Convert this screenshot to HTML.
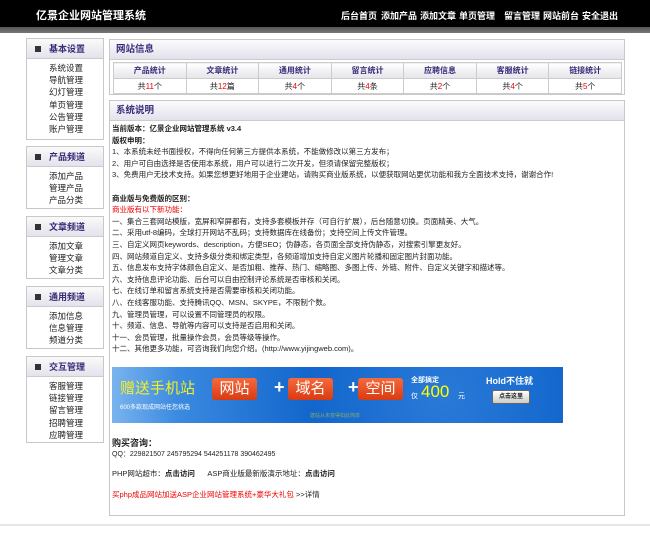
<!DOCTYPE html>
<html><head><meta charset="utf-8"><style>
*{margin:0;padding:0;box-sizing:border-box}
body{width:650px;height:537px;background:#fff;font-family:"Liberation Sans","Noto Sans CJK SC","WenQuanYi Zen Hei",sans-serif;font-size:9px;color:#222;position:relative;overflow:hidden}
.a{position:absolute}
#top{left:0;top:0;width:650px;height:27px;background:#000}
#strip{left:0;top:27px;width:650px;height:6px;background:linear-gradient(#555,#777)}
.logo{left:36px;top:7px;color:#fff;font-size:11px;font-weight:bold}
.nav{top:9px;color:#fff;font-size:9px;font-weight:bold}
.sb{left:26px;width:78px;border:1px solid #c8c8c8;background:#fff}
.sb .h{height:20px;background:linear-gradient(#fafafa,#e4e2ec);border-bottom:1px solid #ccc;font-weight:bold;color:#3a2a78;font-size:9px;line-height:20px;padding-left:8px}
.sb .h i{display:inline-block;width:6px;height:6px;background:#333;margin-right:8px;vertical-align:0}
.sb ul{list-style:none;padding:3px 0 3px 22px;line-height:12.2px;font-size:8.5px}
.pn{border:1px solid #c8c8c8;background:#fff}
.ph{height:20px;background:linear-gradient(#fbfbfd,#e3e2ec);border-bottom:1px solid #ccc;color:#3a2a78;font-weight:bold;font-size:9.5px;line-height:20px;padding-left:6px}
table{border-collapse:collapse;position:absolute;left:113px;top:62px;width:509px}
td{border:1px solid #ccc;text-align:center;height:15px;font-size:8px}
tr.h td{background:linear-gradient(#fff,#e4e4ea);color:#3a2a78;font-weight:bold;height:16px}
.r{color:#e00}
#txt{left:112px;top:123px;width:510px;line-height:11.6px;font-size:7.5px}
b{font-weight:bold}
#ban{left:112px;top:367px;width:451px;height:56px;background:radial-gradient(circle at 330px 30px,#2a7ad8,#1266cc 40%,#3b8ae0 80%,#7ab4ee)}
.bx{position:absolute;top:11px;height:22px;background:linear-gradient(#f56a3c,#d93a12);border-radius:3px;color:#fff;font-size:15px;line-height:22px;text-align:center}
</style></head><body>
<div class="a" id="top"></div><div class="a" id="strip"></div>
<div class="a logo">亿景企业网站管理系统</div>
<div class="a nav" style="left:341px">后台首页</div>
<div class="a nav" style="left:381px">添加产品</div>
<div class="a nav" style="left:420px">添加文章</div>
<div class="a nav" style="left:459px">单页管理</div>
<div class="a nav" style="left:504px">留言管理</div>
<div class="a nav" style="left:543px">网站前台</div>
<div class="a nav" style="left:582px">安全退出</div>

<div class="a sb" style="top:38px;height:102px"><div class="h"><i></i>基本设置</div><ul><li>系统设置</li><li>导航管理</li><li>幻灯管理</li><li>单页管理</li><li>公告管理</li><li>账户管理</li></ul></div>
<div class="a sb" style="top:146px;height:63px"><div class="h"><i></i>产品频道</div><ul><li>添加产品</li><li>管理产品</li><li>产品分类</li></ul></div>
<div class="a sb" style="top:216px;height:63px"><div class="h"><i></i>文章频道</div><ul><li>添加文章</li><li>管理文章</li><li>文章分类</li></ul></div>
<div class="a sb" style="top:286px;height:63px"><div class="h"><i></i>通用频道</div><ul><li>添加信息</li><li>信息管理</li><li>频道分类</li></ul></div>
<div class="a sb" style="top:356px;height:87px"><div class="h"><i></i>交互管理</div><ul><li>客服管理</li><li>链接管理</li><li>留言管理</li><li>招聘管理</li><li>应聘管理</li></ul></div>

<div class="a pn" style="left:109px;top:39px;width:516px;height:56px"><div class="ph">网站信息</div></div>
<table><tr class="h"><td>产品统计</td><td>文章统计</td><td>通用统计</td><td>留言统计</td><td>应聘信息</td><td>客服统计</td><td>链接统计</td></tr>
<tr><td>共<span class="r">11</span>个</td><td>共<span class="r">12</span>篇</td><td>共<span class="r">4</span>个</td><td>共<span class="r">4</span>条</td><td>共<span class="r">2</span>个</td><td>共<span class="r">4</span>个</td><td>共<span class="r">5</span>个</td></tr></table>

<div class="a pn" style="left:109px;top:100px;width:516px;height:416px"><div class="ph">系统说明</div></div>
<div class="a" id="txt">
<b>当前版本：亿景企业网站管理系统 v3.4</b><br><b>版权申明：</b><br>
1、本系统未经书面授权，不得向任何第三方提供本系统，不能做修改以第三方发布；<br>
2、用户可自由选择是否使用本系统，用户可以进行二次开发，但须请保留完整版权；<br>
3、免费用户无技术支持。如果您想更好地用于企业建站，请购买商业版系统，以便获取网站更优功能和我方全面技术支持，谢谢合作!<br><br>
<b>商业版与免费版的区别：</b><br><span class="r">商业版有以下新功能：</span><br>
一、集合三套网站模版，宽屏和窄屏都有，支持多套模板并存（可自行扩展），后台随意切换。页面精美、大气。<br>
二、采用utf-8编码，全球打开网站不乱码；支持数据库在线备份；支持空间上传文件管理。<br>
三、自定义网页keywords、description，方便SEO；伪静态，各页面全部支持伪静态，对搜索引擎更友好。<br>
四、网站频道自定义、支持多级分类和绑定类型，各频道增加支持自定义图片轮播和固定图片封面功能。<br>
五、信息发布支持字体颜色自定义、是否加粗、推荐、热门、缩略图、多图上传、外链、附件、自定义关键字和描述等。<br>
六、支持信息评论功能、后台可以自由控制评论系统是否审核和关闭。<br>
七、在线订单和留言系统支持是否需要审核和关闭功能。<br>
八、在线客服功能、支持腾讯QQ、MSN、SKYPE，不限制个数。<br>
九、管理员管理，可以设置不同管理员的权限。<br>
十、频道、信息、导航等内容可以支持是否启用和关闭。<br>
十一、会员管理，批量操作会员，会员等级等操作。<br>
十二、其他更多功能，可咨询我们向您介绍。(http://www.yijingweb.com)。
</div>
<div class="a" id="ban">
<div class="a" style="left:8px;top:10px;color:#f4f020;font-size:15px">赠送手机站</div>
<div class="a" style="left:8px;top:35px;color:#fff;font-size:6px">600多款现成网站任您挑选</div>
<div class="bx" style="left:100px;width:45px">网站</div>
<div class="a" style="left:162px;top:10px;color:#fff;font-size:18px;font-weight:bold">+</div>
<div class="bx" style="left:176px;width:45px">域名</div>
<div class="a" style="left:236px;top:10px;color:#fff;font-size:18px;font-weight:bold">+</div>
<div class="bx" style="left:246px;width:45px">空间</div>
<div class="a" style="left:198px;top:45px;color:#8a6;font-size:5px">建站从未变得如此简单</div>
<div class="a" style="left:299px;top:8px;color:#fff;font-size:7px;font-weight:bold">全部搞定</div>
<div class="a" style="left:299px;top:24px;color:#fff;font-size:7px">仅</div>
<div class="a" style="left:309px;top:15px;color:#ff0;font-size:17px">400</div>
<div class="a" style="left:346px;top:24px;color:#fff;font-size:7px">元</div>
<div class="a" style="left:374px;top:7px;color:#fff;font-size:9px;font-weight:bold">Hold不住就</div>
<div class="a" style="left:380px;top:23px;width:38px;height:14px;background:linear-gradient(#fff,#ccc);border:1px solid #666;border-radius:2px;font-size:6px;line-height:12px;text-align:center;font-weight:bold">点击这里</div>
</div>
<div class="a" style="left:112px;top:436px;font-weight:bold">购买咨询：</div>
<div class="a" style="left:112px;top:449px;font-size:7px">QQ：229821507 245795294 544251178 390462495</div>
<div class="a" style="left:112px;top:468px;font-size:7.5px">PHP网站超市：<b>点击访问</b>&nbsp;&nbsp;&nbsp;&nbsp;&nbsp;&nbsp;ASP商业版最新版演示地址：<b>点击访问</b></div>
<div class="a" style="left:112px;top:489px;font-size:7.5px"><span class="r">买php成品网站加送ASP企业网站管理系统+豪华大礼包</span> &gt;&gt;详情</div>
<div class="a" style="left:0;top:524px;width:650px;height:2px;background:#e6e6e6"></div>
</body></html>
